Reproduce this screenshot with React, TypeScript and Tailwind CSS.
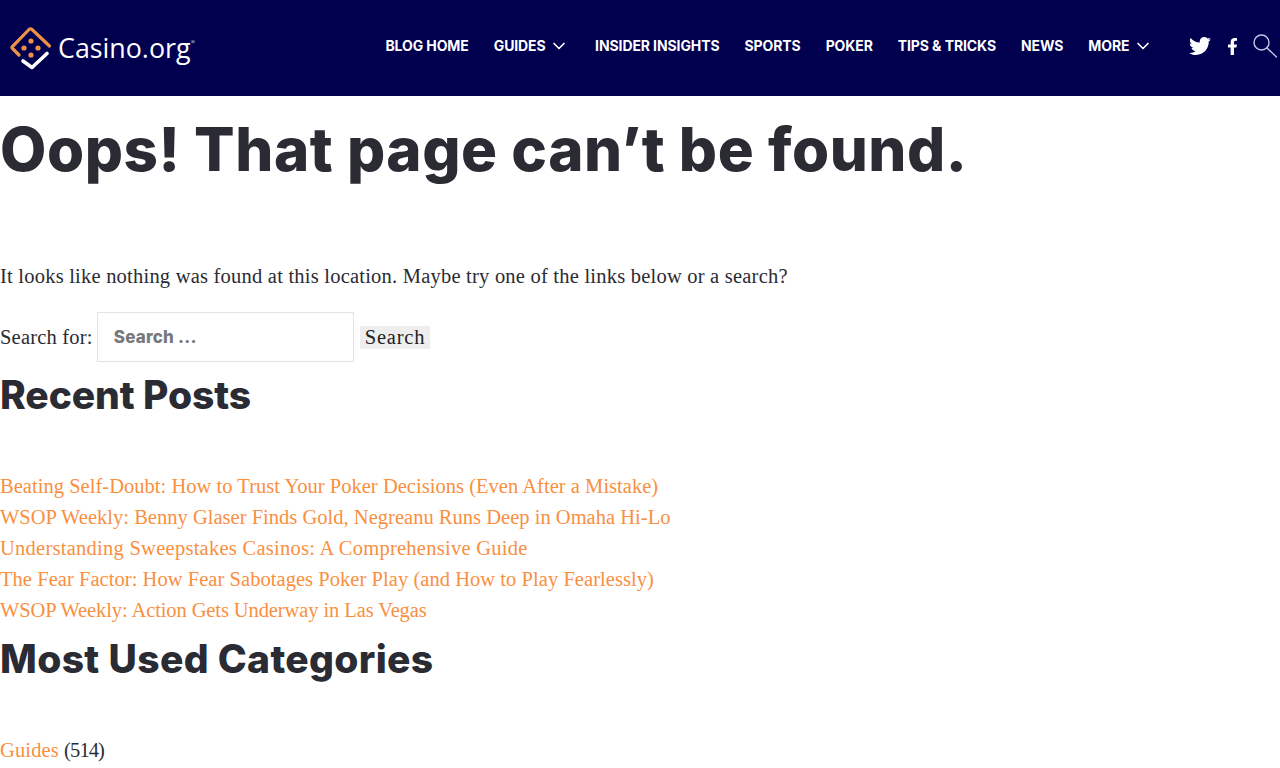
import { ChevronDown } from 'lucide-react';
import { FaFacebookF, FaTwitter } from 'react-icons/fa';

const navItems = [
  { label: 'BLOG HOME' },
  { label: 'GUIDES', caret: true },
  { label: 'INSIDER INSIGHTS' },
  { label: 'SPORTS' },
  { label: 'POKER' },
  { label: 'TIPS & TRICKS' },
  { label: 'NEWS' },
  { label: 'MORE', caret: true },
];

// tracking differs per line: the serif here doesn't have the original's widths
const recentPosts = [
  { title: 'Beating Self-Doubt: How to Trust Your Poker Decisions (Even After a Mistake)', fit: 'tracking-[0.03px]' },
  { title: 'WSOP Weekly: Benny Glaser Finds Gold, Negreanu Runs Deep in Omaha Hi-Lo', fit: 'tracking-[0.02px]' },
  { title: 'Understanding Sweepstakes Casinos: A Comprehensive Guide', fit: 'tracking-[0.26px]' },
  { title: 'The Fear Factor: How Fear Sabotages Poker Play (and How to Play Fearlessly)', fit: 'tracking-[0.05px]' },
  { title: 'WSOP Weekly: Action Gets Underway in Las Vegas', fit: 'tracking-[-0.1px]' },
];

const heading = "font-['Inter',sans-serif] font-extrabold text-[#2a2b33]";

function Logo() {
  return (
    <svg width="44" height="44" viewBox="0 0 44 44" fill="none">
      <path d="M10 29 L3.5 22.5 Q2.5 21.5 3.5 20.5 L20 3.5 Q21.5 2.2 23 3.5 L40.5 20" stroke="#ef9144" strokeWidth="3.2" strokeLinecap="round" strokeLinejoin="round" />
      <circle cx="15" cy="22" r="2.6" fill="#ef9144" />
      <circle cx="22" cy="15" r="2.6" fill="#ef9144" />
      <circle cx="29" cy="22" r="2.6" fill="#ef9144" />
      <circle cx="22" cy="29" r="2.6" fill="#ef9144" />
      <path d="M14 35 L23 41.5 L38 27.5" stroke="#ffffff" strokeWidth="3.6" strokeLinecap="round" strokeLinejoin="round" />
    </svg>
  );
}

function SearchGlass() {
  return (
    <svg width="24" height="24" viewBox="0 0 24 24" fill="none" stroke="#c5c8e6" strokeWidth="1.4" className="ml-[12px] mr-[3px]">
      <circle cx="8.5" cy="8.5" r="7.5" />
      <path d="M14 14 L23.5 23" strokeLinecap="round" />
    </svg>
  );
}

export default function App() {
  return (
    <div className="h-[768px] overflow-hidden bg-white font-['Liberation_Serif',serif] text-[20.5px] leading-[31px] text-[#2a2b33]">
      <header className="flex h-24 items-center bg-[#00004f] text-white">
        <a className="ml-[9px] flex items-center">
          <Logo />
          <span className="ml-[5px] font-['Open_Sans',sans-serif] text-[26.8px] font-medium leading-none">Casino.org</span>
          <span className="mb-3 text-[6px] leading-none">®</span>
        </a>
        <nav className="mb-[5px] ml-auto flex items-center gap-[25px] font-['Inter',sans-serif] text-[14px] font-bold tracking-[-0.1px]">
          {navItems.map((item) => (
            <a key={item.label} className="flex items-center gap-[3px]">
              {item.label}
              {item.caret && <ChevronDown size={20} strokeWidth={2} className="mr-[1.5px]" />}
            </a>
          ))}
        </nav>
        <div className="mb-[4px] ml-[35px] flex items-center">
          <FaTwitter size={22} />
          <FaFacebookF size={17} className="ml-[13px]" />
          <SearchGlass />
        </div>
      </header>

      <main>
        <h1 className={`${heading} mt-[17px] text-[60px] leading-[72px] tracking-[0.55px]`}>Oops! That page can’t be found.</h1>
        <p className="mt-[76px] tracking-[0.22px]">It looks like nothing was found at this location. Maybe try one of the links below or a search?</p>

        <form className="mt-[20px] flex items-center">
          <label className="tracking-[0.2px]">Search for:</label>
          <input
            placeholder="Search ..."
            className="ml-[4px] h-[50px] w-[257px] border border-[#e3e3e3] px-4 font-['Inter',sans-serif] text-[17px] font-extrabold tracking-[0.2px] placeholder:text-[#77787c]"
          />
          <button className="ml-[6px] h-[23px] bg-[#eeeeee] px-[5px] leading-[23px] tracking-[0.8px] text-[#222222]">Search</button>
        </form>

        <h2 className={`${heading} mt-[9px] text-[39px] leading-[48px] tracking-[-0.1px]`}>Recent Posts</h2>
        <ul className="mt-[52px] text-[#f98f3f]">
          {recentPosts.map((post) => (
            <li key={post.title} className={post.fit}>
              <a>{post.title}</a>
            </li>
          ))}
        </ul>

        <h2 className={`${heading} mt-[9px] text-[39px] leading-[48px] tracking-[0.35px]`}>Most Used Categories</h2>
        <ul className="mt-[52px]">
          <li>
            <a className="tracking-[0.15px] text-[#f98f3f]">Guides</a> <span className="tracking-[-0.9px]">(514)</span>
          </li>
        </ul>
      </main>
    </div>
  );
}
